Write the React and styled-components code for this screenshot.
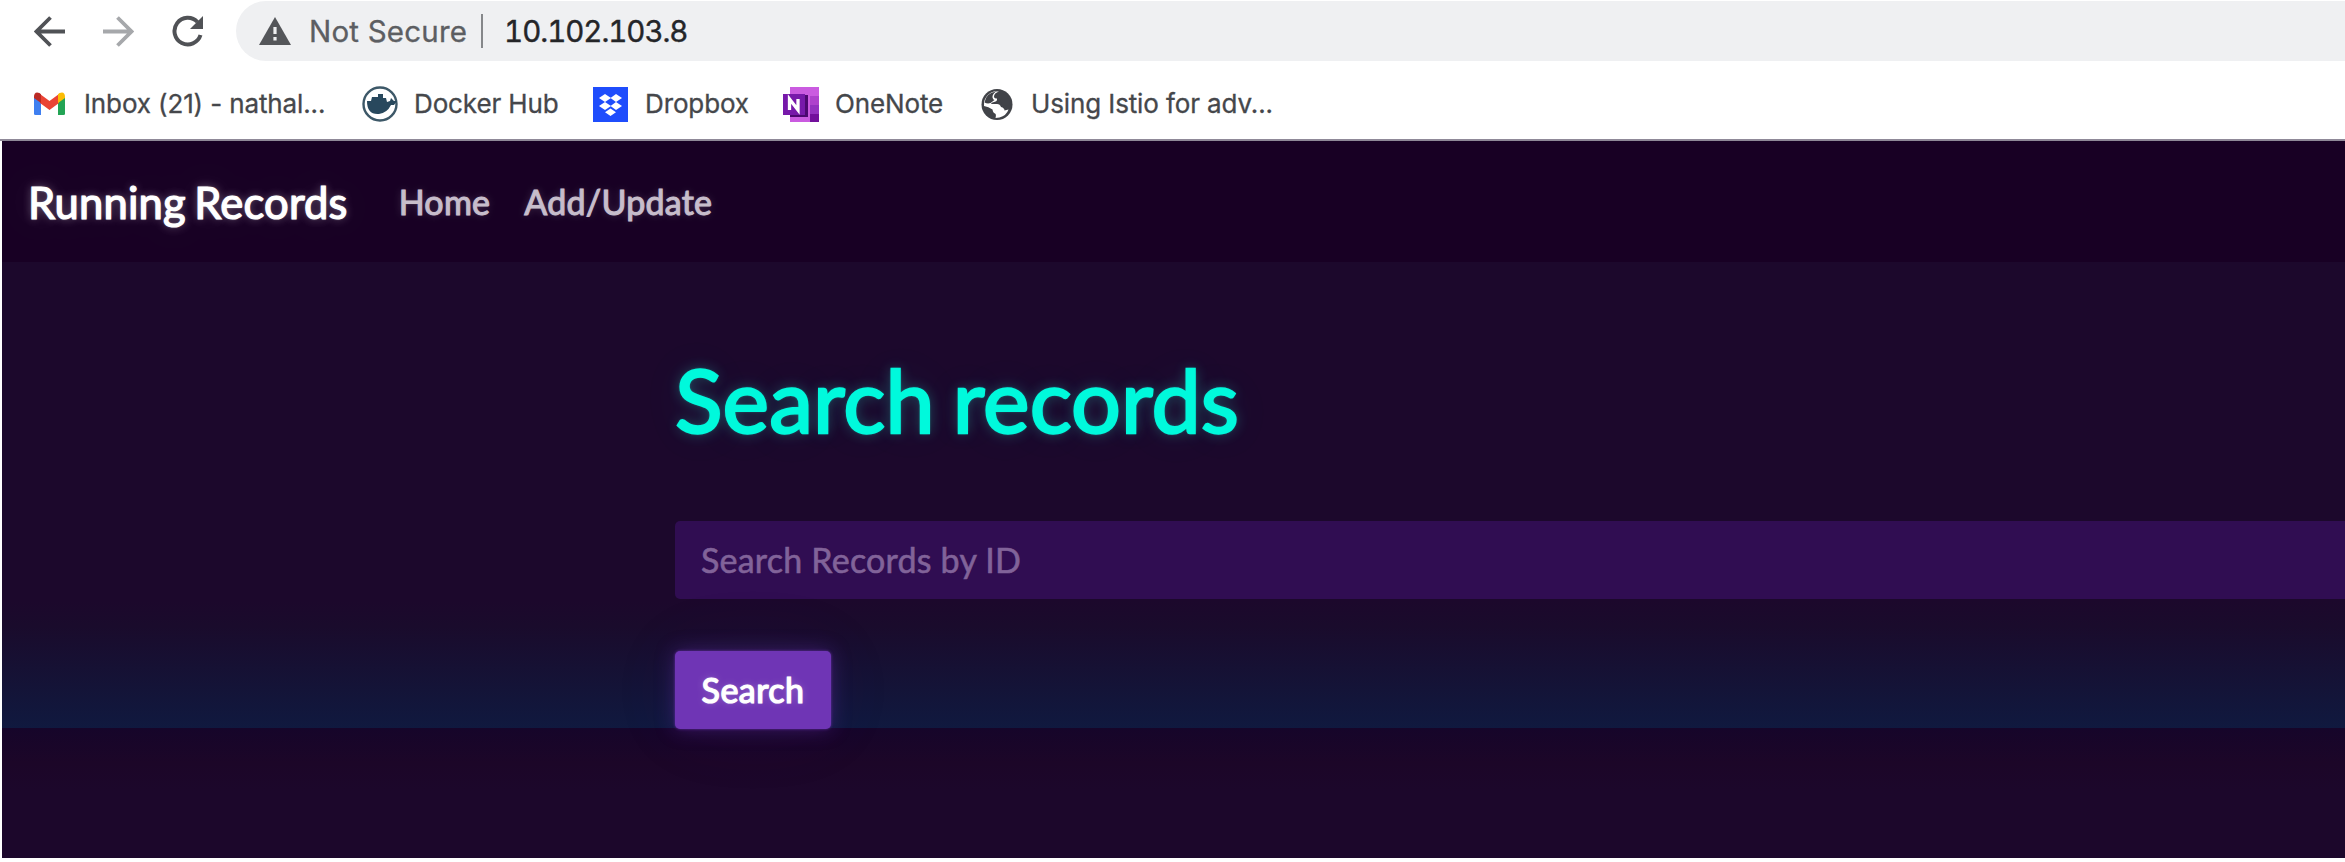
import React from "react";
import styled, { createGlobalStyle } from "styled-components";

const Global = createGlobalStyle`
  *, *::before, *::after { box-sizing: border-box; }
  body { margin: 0; background: #fff; overflow: hidden; }
`;

const Window = styled.div`
  display: flex;
  flex-direction: column;
  width: 100%;
  height: 862px;
  font-family: Inter, "Liberation Sans", sans-serif;
`;

const Toolbar = styled.div`
  display: flex;
  align-items: center;
  height: 62px;
  padding-left: 34px;
`;

const NavButton = styled.button`
  display: flex;
  padding: 0;
  margin-right: ${(p) => p.$gap}px;
  border: 0;
  background: none;
  color: ${(p) => (p.$muted ? "#a6a8ab" : "#505256")};
`;

const AddressBar = styled.div`
  display: flex;
  align-items: center;
  flex: 1;
  height: 60px;
  padding-left: 23px;
  border-radius: 30px 0 0 30px;
  background: #eff0f2;
`;

const Security = styled.span`
  margin-left: 18px;
  padding-right: 14px;
  border-right: 2px solid #85878a;
  color: #5c5e62;
  font-size: 29.5px;
  line-height: 34px;
  letter-spacing: 0.2px;
  -webkit-text-stroke: 0.3px #5c5e62;
`;

const Url = styled.span`
  margin-left: 21px;
  color: #242528;
  font-size: 29.5px;
  line-height: 34px;
  font-variant-numeric: tabular-nums;
  letter-spacing: -1.05px;
  -webkit-text-stroke: 0.4px #242528;
`;

const Bookmarks = styled.div`
  display: flex;
  align-items: center;
  height: 79px;
  padding: 7px 0 0 34px;
  border-bottom: 2px solid #8f8998;
`;

const Bookmark = styled.a`
  display: flex;
  align-items: center;
  gap: ${(p) => p.$gap}px;
  width: ${(p) => p.$width}px;
  color: #45474b;
  font-size: 26px;
  line-height: 34px;
  letter-spacing: -0.12px;
  white-space: nowrap;
  -webkit-text-stroke: 0.3px #45474b;
`;

const Page = styled.main`
  display: flex;
  flex-direction: column;
  height: 717px;
  margin-left: 2px;
  background: linear-gradient(#1c082c 0 460px, #1a0b2c 485px, #10193f 587px, #16052a 587px, #1c0628 622px, #1c072b 650px);
  font-family: Lato, sans-serif;
`;

const Navbar = styled.nav`
  display: flex;
  align-items: center;
  height: 121px;
  padding: 0 0 0 26px;
  background: #180024;
`;

const Brand = styled.a`
  margin-right: 51px;
  color: #fff;
  font-size: 43.5px;
  letter-spacing: 0.2px;
  word-spacing: -3px;
  text-shadow: 0 0 2px #fffa, 0 0 10px #fff6, 0 0 40px #ffffff22;
  -webkit-text-stroke: 1.2px #fff;
`;

const NavLink = styled.a`
  margin-right: 34px;
  color: #c7bdcb;
  font-size: 34px;
  letter-spacing: 0.25px;
  text-shadow: 0 0 2px #fff5, 0 0 8px #ffffff33;
  -webkit-text-stroke: 1px #c7bdcb;
`;

const Content = styled.section`
  display: flex;
  flex-direction: column;
  align-items: flex-start;
  padding: 85px 0 0 673px;
`;

const Title = styled.h1`
  margin: 0 0 70px;
  color: #00f9dc;
  font-size: 88px;
  font-weight: 400;
  line-height: 104px;
  letter-spacing: 0.1px;
  word-spacing: -4.5px;
  text-shadow: 0 0 3px #32fbe2aa, 0 0 14px #32fbe255, 0 0 50px #32fbe21c;
  -webkit-text-stroke: 2.4px #00f9dc;
`;

const SearchInput = styled.input`
  width: 100%;
  height: 78px;
  margin-bottom: 52px;
  padding: 0 26px 1px;
  border: 0;
  border-radius: 5px 0 0 5px;
  background: #300d52;
  color: #fff;
  font: 34px Lato, sans-serif;
  letter-spacing: 0.22px;
  &::placeholder {
    color: #816399;
    opacity: 1;
    -webkit-text-stroke: 0.6px #816399;
  }
`;

const SearchButton = styled.button`
  width: 156px;
  height: 78px;
  padding: 0 0 1px;
  border: 0;
  border-radius: 5px;
  background: #6f35b5;
  color: #fff;
  font: 34px Lato, sans-serif;
  letter-spacing: 0.45px;
  text-shadow: 0 0 2px #fffa, 0 0 8px #fff4;
  -webkit-text-stroke: 1.2px #fff;
  box-shadow: 0 0 3px #6f35b5cc, 0 0 20px #6f35b566, 0 0 80px #6f35b510;
`;

const Arrow = ({ forward }) => (
  <svg width="31" height="31" viewBox="0 0 31 31" fill="none" stroke="currentColor" strokeWidth="3.8"
    transform={forward ? "scale(-1 1)" : undefined}>
    <path d="M31 15.5H3M16.500 1.500 2.500 15.500l14 14" />
  </svg>
);

const Reload = () => (
  <svg width="32" height="32" viewBox="0 0 32 32">
    <path d="M28.500 20A13.300 13.300 0 1 1 25.500 7" fill="none" stroke="currentColor" strokeWidth="4" />
    <path d="M31 1v13H18z" fill="currentColor" />
  </svg>
);

const Warning = () => (
  <svg width="32" height="28" viewBox="0 0 32 28">
    <path d="M16 0 32 28H0z" fill="#54565a" />
    <path d="M14.400 10h3.200v7h-3.200zM14.400 20h3.200v3.400h-3.200z" fill="#eff0f2" />
  </svg>
);

const Gmail = () => (
  <svg width="32" height="24" viewBox="0 0 32 24">
    <path d="M0 5v17q0 1 1.500 1H7V9z" fill="#3f7ff0" />
    <path d="M31 5v17q0 1-1.500 1H24V9z" fill="#23a455" />
    <path d="m6 2 9.500 7L25 2v9l-9.500 7L6 11z" fill="#ea4335" />
    <path d="M0 5Q0-1 5.500 1L7 2.200V11L0 6z" fill="#bb2a24" />
    <path d="M31 5q0-6-5.500-4L24 2.200V11l7-5z" fill="#fbbc04" />
  </svg>
);

const Docker = () => (
  <svg width="36" height="36" viewBox="0 0 36 36">
    <circle cx="18" cy="18" r="16.500" fill="#fff" stroke="#3d5868" strokeWidth="2.400" />
    <path d="M5 15h4l1-4h6V8h5v4h3l1 4 3-1 1-3 3 3 3 0-3 4h-3q-4 8-12 9Q5 29 5 15z" fill="#28485d" />
  </svg>
);

const DropboxIcon = () => (
  <svg width="35" height="35" viewBox="0 0 35 35">
    <path d="M0 0h35v35H0z" fill="#1f4dfc" />
    <path d="m12 7 6 4-6 4-6-4zM23 7l6 4-6 4-5.500-4zM12 15l6 4-6 4-6-4zM23 15l6 4-6 4-5.500-4zM17.500 21.500l5.500 3.700-5.500 3.800-5.500-3.800z" fill="#fff" />
  </svg>
);

const OneNoteIcon = () => (
  <svg width="38" height="35" viewBox="0 0 38 35">
    <path d="M7 0h29v35H7z" fill="#ca5be0" />
    <path d="M27 9h9v9h-9z" fill="#ae42cc" />
    <path d="M27 18h9v9h-9z" fill="#9332bf" />
    <path d="M27 27h9v8h-9z" fill="#72109b" />
    <path d="M7 8h18v22H7z" fill="#4c0870" />
    <path d="M0 7h22v21H0z" fill="#7719aa" />
    <path d="M6.500 23V12l8.500 11V12" fill="none" stroke="#fff" strokeWidth="3.300" />
  </svg>
);

const Globe = () => (
  <svg width="33" height="33" viewBox="0 0 33 33">
    <circle cx="16" cy="16.500" r="15.500" fill="#414348" />
    <path d="M18 3.500q-5 1.500-5 5 0 2 3 2 .5 3-3 3.500-3 .5-3 2h6q3 0 4 3 3.500 1 3.500 3.500l4-1q-2 6-9 8l-4 .5q1-4-.5-4.500-2-.5-2.500-4-4-3-8.500-3.500-.5-4 1-7 3-6 9-7.500z" fill="#fff" />
    <path d="M3.500 14.500Q5 5 15 3.500q-4 3-3.500 6 .5 2 2 2.500l-4 3q-3 1-6-.5zM21 5q7 3 8 11l-4 2q-4-1-5-4-1-2 1-4z" fill="#414348" />
  </svg>
);

const bookmarks = [
  { label: "Inbox (21) - nathal...", Icon: Gmail, gap: 18, width: 328 },
  { label: "Docker Hub", Icon: Docker, gap: 16, width: 231 },
  { label: "Dropbox", Icon: DropboxIcon, gap: 17, width: 190 },
  { label: "OneNote", Icon: OneNoteIcon, gap: 14, width: 198 },
  { label: "Using Istio for adv...", Icon: Globe, gap: 17, width: 320 },
];

export default function App() {
  return (
    <Window>
      <Global />
      <Toolbar>
        <NavButton $gap={38} aria-label="Back"><Arrow /></NavButton>
        <NavButton $gap={38} $muted aria-label="Forward"><Arrow forward /></NavButton>
        <NavButton $gap={32} aria-label="Reload"><Reload /></NavButton>
        <AddressBar>
          <Warning />
          <Security>Not Secure</Security>
          <Url>10.102.103.8</Url>
        </AddressBar>
      </Toolbar>
      <Bookmarks>
        {bookmarks.map(({ label, Icon, gap, width }) => (
          <Bookmark key={label} $gap={gap} $width={width}><Icon />{label}</Bookmark>
        ))}
      </Bookmarks>
      <Page>
        <Navbar>
          <Brand>Running Records</Brand>
          <NavLink>Home</NavLink>
          <NavLink>Add/Update</NavLink>
        </Navbar>
        <Content>
          <Title>Search records</Title>
          <SearchInput placeholder="Search Records by ID" />
          <SearchButton>Search</SearchButton>
        </Content>
      </Page>
    </Window>
  );
}
